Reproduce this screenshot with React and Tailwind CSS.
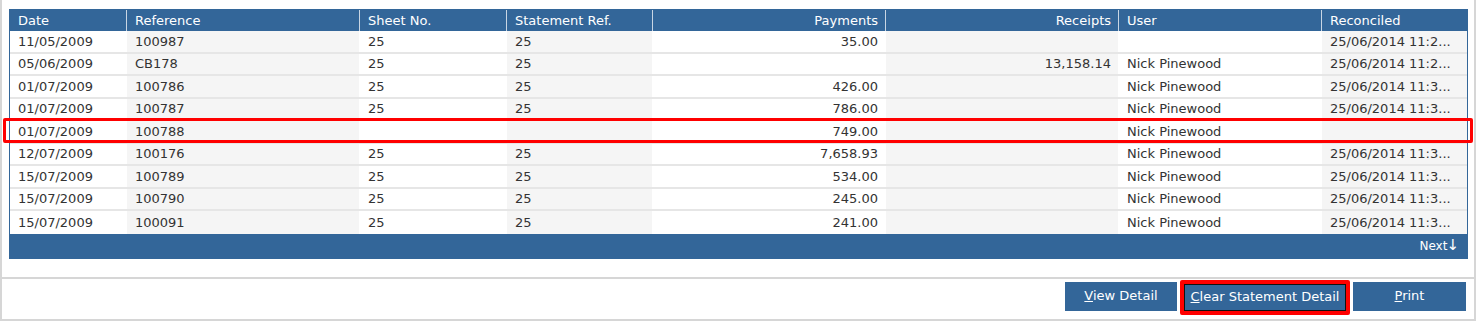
const columns = [
    { label: "Date" },
    { label: "Reference" },
    { label: "Sheet No." },
    { label: "Statement Ref." },
    { label: "Payments", right: true },
    { label: "Receipts", right: true },
    { label: "User" },
    { label: "Reconciled" },
];

const rows = [
    ["11/05/2009", "100987", "25", "25", "35.00", "", "", "25/06/2014 11:2..."],
    ["05/06/2009", "CB178", "25", "25", "", "13,158.14", "Nick Pinewood", "25/06/2014 11:2..."],
    ["01/07/2009", "100786", "25", "25", "426.00", "", "Nick Pinewood", "25/06/2014 11:3..."],
    ["01/07/2009", "100787", "25", "25", "786.00", "", "Nick Pinewood", "25/06/2014 11:3..."],
    ["01/07/2009", "100788", "", "", "749.00", "", "Nick Pinewood", ""],
    ["12/07/2009", "100176", "25", "25", "7,658.93", "", "Nick Pinewood", "25/06/2014 11:3..."],
    ["15/07/2009", "100789", "25", "25", "534.00", "", "Nick Pinewood", "25/06/2014 11:3..."],
    ["15/07/2009", "100790", "25", "25", "245.00", "", "Nick Pinewood", "25/06/2014 11:3..."],
    ["15/07/2009", "100091", "25", "25", "241.00", "", "Nick Pinewood", "25/06/2014 11:3..."],
];

const gridCols = "grid grid-cols-[116px_233px_147px_146px_233px_233px_203px_146px]";

const App = () => {
    return (
        <div className="w-[1484px] h-[324px] bg-white font-['DejaVu_Sans',sans-serif] text-[13px] text-[#333333]">
            <div className="w-[1476px] border-x-2 border-[#d6d6d6]">
                <div className="pt-[9px] pl-[7px] pr-[6px] pb-[18px]">
                    <div className="border border-[#336699]">
                        {/* header */}
                        <div className={`${gridCols} h-[21px] bg-[#336699] text-white`}>
                            {columns.map((c, i) => (
                                <div
                                    key={c.label}
                                    className={`flex items-center px-2 ${i > 0 ? "border-l border-[#c9d6e4]" : ""} ${c.right ? "justify-end pr-[7px]" : ""}`}
                                >
                                    {c.label}
                                </div>
                            ))}
                        </div>
                        {/* body */}
                        {rows.map((r, ri) => (
                            <div
                                key={ri}
                                className={`${gridCols} relative h-[22.5px] ${ri < rows.length - 1 ? "border-b-2 border-[#e6e6e6]" : ""}`}
                            >
                                {r.map((v, ci) => (
                                    <div
                                        key={ci}
                                        className={`flex items-center px-2 whitespace-nowrap overflow-hidden ${ci % 2 === 1 ? "bg-[#f5f5f5]" : "bg-white"} ${ci > 0 ? "border-l border-white" : ""} ${columns[ci].right ? "justify-end pr-[7px]" : ""}`}
                                    >
                                        {v}
                                    </div>
                                ))}
                                {ri === 4 && (
                                    <span className="pointer-events-none absolute -left-[7px] -right-[6px] -top-[3px] -bottom-[1px] border-[3px] border-[#ff0000] rounded-[2px]" />
                                )}
                            </div>
                        ))}
                        {/* footer */}
                        <div className="h-[24px] bg-[#336699] text-white text-[12px] flex items-center justify-end pr-[8px]">
                            <span>Next</span>
                            <span className="text-[15px] leading-none -ml-[1px]">↓</span>
                        </div>
                    </div>
                </div>
                <div className="h-[44px] border-t-2 border-b-2 border-[#d6d6d6] flex items-start justify-end gap-[3px] pr-[8px] pt-[1px]">
                    <div className="mt-[2px] w-[112px] h-[29px] bg-[#336699] text-white flex items-center justify-center">
                        <span><span className="underline">V</span>iew Detail</span>
                    </div>
                    <div className="w-[170px] h-[35px] border-[4px] border-[#ff0000] rounded-[2px]">
                        <div className="w-full h-full bg-[#336699] border border-[#111111] text-white flex items-center justify-center">
                            <span><span className="underline">C</span>lear Statement Detail</span>
                        </div>
                    </div>
                    <div className="mt-[2px] w-[113px] h-[29px] bg-[#336699] text-white flex items-center justify-center">
                        <span><span className="underline">P</span>rint</span>
                    </div>
                </div>
            </div>
        </div>
    );
};

export default App;
